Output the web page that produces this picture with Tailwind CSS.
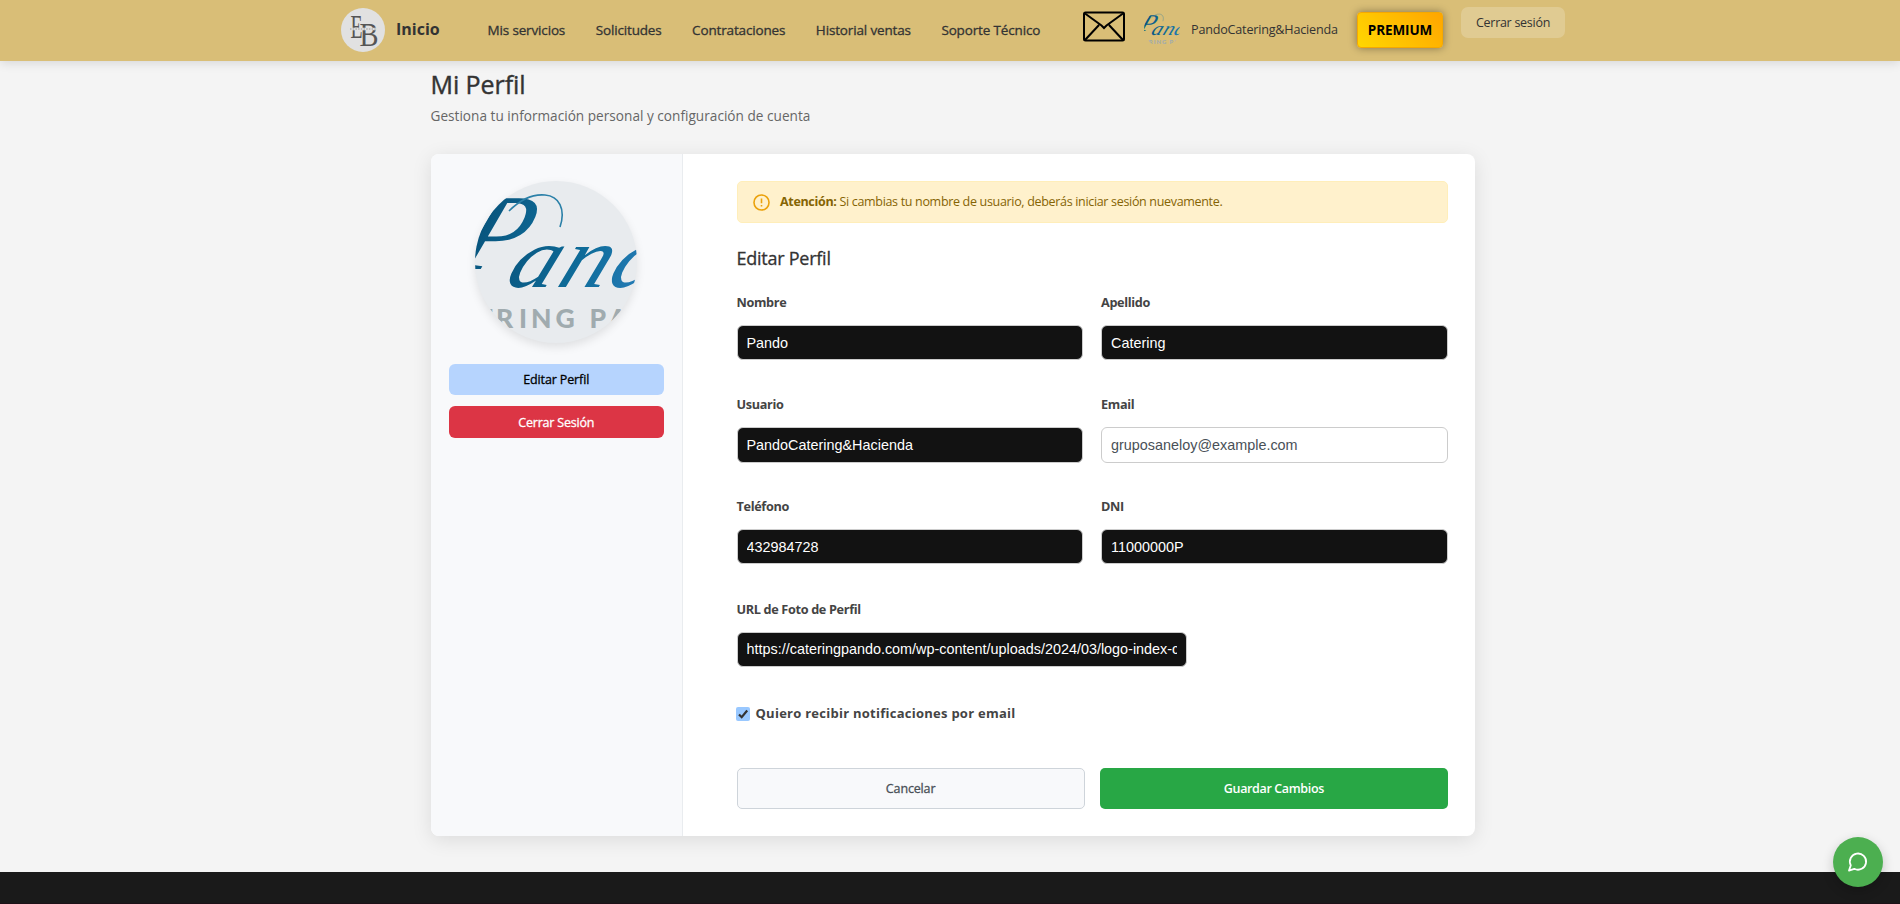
<!DOCTYPE html>
<html lang="es">
<head>
<meta charset="utf-8">
<title>Mi Perfil</title>
<script src="https://cdn.jsdelivr.net/npm/@tailwindcss/browser@4"></script>
</head>
<body class="h-[904px] overflow-hidden bg-[#f4f4f4] font-['Open_Sans','Noto_Sans',sans-serif] text-[#333]">

<svg class="absolute size-0">
  <defs>
    <linearGradient id="ink" gradientUnits="userSpaceOnUse" x1="0" y1="0" x2="162" y2="0">
      <stop offset="0" stop-color="#07527a"/><stop offset=".55" stop-color="#0f6d9b"/><stop offset="1" stop-color="#2a7fbd"/>
    </linearGradient>
  </defs>
  <symbol id="pando" viewBox="0 0 162 162">
    <g fill="url(#ink)" font-family="Liberation Serif, serif" font-style="italic">
      <text transform="translate(-20 88) skewX(-22)" font-size="108" x="-4" y="0">P</text>
      <text transform="translate(0 106) skewX(-22) scale(1.120 1)" font-size="87" x="25 71 116" y="0">and</text>
    </g>
    <path d="M34 30C46 18 59 13 70 14C84 15 91 28 85 46" fill="none" stroke="#2b80a8" stroke-width="1.6"/>
    <text font-family="Lato, sans-serif" font-weight="900" font-size="26.5" fill="#a0abaf" x="3 21 44 56 80.500 100 114.500 134" y="146.500">ERING PA</text>
  </symbol>
</svg>

<header class="relative flex h-[61px] bg-[#d9be77] pl-[341px] shadow-[0_2px_10px_rgba(0,0,0,0.12)]">
  <svg class="mt-[7.500px] size-11" viewBox="0 0 44 44">
    <circle cx="22" cy="22" r="22" fill="#e1e1e1"/>
    <g font-family="Liberation Serif, serif" fill="#555">
      <text x="9.500" y="29.500" font-size="34" textLength="12" lengthAdjust="spacingAndGlyphs">E</text>
      <text x="18.500" y="37.500" font-size="34" textLength="19" lengthAdjust="spacingAndGlyphs">B</text>
    </g>
    <path d="M9 21h26" stroke="#e1e1e1" stroke-width="2.500"/>
    <path d="M9 21h26" stroke="#999" stroke-width="1" stroke-dasharray="1.500 1.200"/>
  </svg>
  <a class="ml-[11px] mt-[17px] w-[91.500px] text-[16px] leading-6 font-bold">Inicio</a>
  <nav class="mt-[20px] flex w-[595px] gap-[30.500px] whitespace-nowrap text-[13.500px] leading-5 font-medium tracking-[-0.150px] [-webkit-text-stroke:0.3px]">
    <a>Mis servicios</a><a>Solicitudes</a><a>Contrataciones</a><a>Historial ventas</a><a>Soporte Técnico</a>
  </nav>
  <svg class="mt-[11px] h-[31px] w-[42px]" viewBox="0 0 42 31" fill="none" stroke="#000" stroke-width="2">
    <rect x="1" y="1.500" width="40" height="28" rx="1.500"/>
    <path d="M2 2.500L18.500 14.500L21 17L23.500 14.500L40 2.500M2 29L16 14M40 29L26 14"/>
  </svg>
  <svg class="ml-[19.500px] mt-[11px] size-9 rounded-full"><use href="#pando"/></svg>
  <span class="ml-[11px] mt-[20px] w-[166px] text-[12.600px] leading-5 tracking-[-0.200px]">PandoCatering&amp;Hacienda</span>
  <span class="mt-3 flex h-9 w-[86px] items-center justify-center rounded-[4px] border border-[#f5a800] bg-linear-45 from-[#ffd700] to-[#ffa500] text-[13.500px] font-bold tracking-[-0.100px] text-black shadow-[0_0_8px_rgba(0,0,0,0.4)]">PREMIUM</span>
  <button class="ml-[18px] mt-[7px] flex h-[31px] w-[104px] items-center justify-center rounded-[7px] bg-white/20 pt-0.5 text-[12.500px] tracking-[-0.280px]">Cerrar sesión</button>
</header>

<main class="ml-[430.500px] w-[1044.500px]">
  <h1 class="pt-[6px] text-[25px] leading-[34px] font-medium tracking-[-0.070px] [-webkit-text-stroke:0.4px]">Mi Perfil</h1>
  <p class="mt-[5px] text-[13.600px] leading-5 tracking-[0.020px] text-[#666]">Gestiona tu información personal y configuración de cuenta</p>

  <section class="mt-[28px] flex h-[682px] overflow-hidden rounded-[8px] bg-white shadow-[0_4px_20px_rgba(0,0,0,0.1)]">
    <aside class="flex w-[252.500px] flex-col items-center border-r border-[#e9ecef] bg-[#f8f9fb] pt-[27px]">
      <svg class="size-[162px] shrink-0 rounded-full bg-[#e8ebee] shadow-[0_4px_10px_rgba(0,0,0,0.1)]"><use href="#pando"/></svg>
      <button class="mt-[21px] flex h-[31px] w-[215px] shrink-0 items-center justify-center rounded-[6px] bg-[#b6d4fe] pt-0.5 text-[12.500px] font-medium tracking-[-0.130px] text-black [-webkit-text-stroke:0.3px]">Editar Perfil</button>
      <button class="mt-[11px] flex h-8 w-[215px] shrink-0 items-center justify-center rounded-[6px] bg-[#dc3545] pt-0.5 text-[12.500px] font-medium tracking-[-0.200px] text-white [-webkit-text-stroke:0.3px]">Cerrar Sesión</button>
    </aside>

    <div class="w-[765px] pl-[53.500px] pt-[27px]">
      <div class="flex h-[42px] items-center rounded-[5px] border border-[#ffeeba] bg-[#fff1cc] pl-[14px] text-[12.500px] tracking-[-0.320px] text-[#856404]">
        <svg class="mr-[9.500px] size-[19px]" viewBox="0 0 24 24" fill="none" stroke="#eba20c" stroke-width="2"><circle cx="12" cy="12" r="9.500"/><path d="M12 7v6M12 15v2"/></svg>
        <p><strong class="font-bold">Atención:</strong> Si cambias tu nombre de usuario, deberás iniciar sesión nuevamente.</p>
      </div>
      <h2 class="mt-[21px] text-[18px] leading-[28px] font-medium tracking-[-0.250px] [-webkit-text-stroke:0.3px]">Editar Perfil</h2>

      <form>
        <div class="mt-[20px] grid auto-rows-[102.200px] grid-cols-[346.500px_347px] gap-x-[18px] text-[12.700px] font-bold tracking-[-0.340px] text-[#444]">
          <label class="flex flex-col gap-[13px] leading-5"><span>Nombre</span><input value="Pando" class="h-[35px] rounded-[6px] border border-[#ccc] bg-[#121212] px-[9px] font-['Liberation_Sans',sans-serif] text-[14.400px] font-normal tracking-normal text-white"></label>
          <label class="flex flex-col gap-[13px] leading-5"><span>Apellido</span><input value="Catering" class="h-[35px] rounded-[6px] border border-[#ccc] bg-[#121212] px-[9px] font-['Liberation_Sans',sans-serif] text-[14.400px] font-normal tracking-normal text-white"></label>
          <label class="flex flex-col gap-[13px] leading-5"><span>Usuario</span><input value="PandoCatering&amp;Hacienda" class="h-9 rounded-[6px] border border-[#ccc] bg-[#121212] px-[9px] font-['Liberation_Sans',sans-serif] text-[14.400px] font-normal tracking-normal text-white"></label>
          <label class="flex flex-col gap-[13px] leading-5"><span>Email</span><input value="gruposaneloy@example.com" class="h-9 rounded-[6px] border border-[#ccc] bg-white px-[9px] font-['Liberation_Sans',sans-serif] text-[14.400px] font-normal tracking-normal text-[#495057]"></label>
          <label class="flex flex-col gap-[13px] leading-5"><span>Teléfono</span><input value="432984728" class="h-[35px] rounded-[6px] border border-[#ccc] bg-[#121212] px-[9px] font-['Liberation_Sans',sans-serif] text-[14.400px] font-normal tracking-normal text-white"></label>
          <label class="flex flex-col gap-[13px] leading-5"><span>DNI</span><input value="11000000P" class="h-[35px] rounded-[6px] border border-[#ccc] bg-[#121212] px-[9px] font-['Liberation_Sans',sans-serif] text-[14.400px] font-normal tracking-normal text-white"></label>
          <label class="col-span-2 flex flex-col gap-[13px] leading-5"><span>URL de Foto de Perfil</span><input value="https://cateringpando.com/wp-content/uploads/2024/03/logo-index-catering.png" class="h-[35px] w-[450px] rounded-[6px] border border-[#ccc] bg-[#121212] px-[9px] font-['Liberation_Sans',sans-serif] text-[14.400px] font-normal tracking-normal text-white"></label>
        </div>
        <label class="-ml-px mt-[3.400px] flex h-5 items-center text-[13px] font-bold tracking-[0.260px] text-[#444]">
          <svg class="mr-[6px] size-[14px]" viewBox="0 0 14 14"><rect width="14" height="14" rx="2" fill="#99c8ff"/><path d="M3 7.500L5.700 10.200L11.200 3.500" fill="none" stroke="#333" stroke-width="2.200"/></svg>
          Quiero recibir notificaciones por email
        </label>
        <div class="mt-[44px] flex gap-[15px] text-[12.500px]">
          <button class="flex h-[41px] w-[348.500px] items-center justify-center rounded-[5px] border border-[#ced4da] bg-[#f8f9fb] pt-0.5 font-medium tracking-[-0.150px] text-[#495057] [-webkit-text-stroke:0.3px]">Cancelar</button>
          <button class="flex h-[41px] w-[348.500px] items-center justify-center rounded-[5px] bg-[#28a745] pt-0.5 font-semibold tracking-[-0.360px] text-white">Guardar Cambios</button>
        </div>
      </form>
    </div>
  </section>
</main>

<footer class="mt-9 h-8 border-b border-[#1d1117] bg-[#1a1a1a]"></footer>

<button class="fixed right-[17px] bottom-[17px] flex size-[50px] items-center justify-center rounded-full bg-[#4caf50] shadow-[0_4px_12px_rgba(0,0,0,0.2)]">
  <svg class="size-6" viewBox="0 0 24 24" fill="none" stroke="#fff" stroke-width="2" stroke-linecap="round" stroke-linejoin="round"><path d="M7.900 20A9 9 0 1 0 4 16.100L2 22Z" transform="translate(1.200 .8) scale(.9)"/></svg>
</button>
</body>
</html>
